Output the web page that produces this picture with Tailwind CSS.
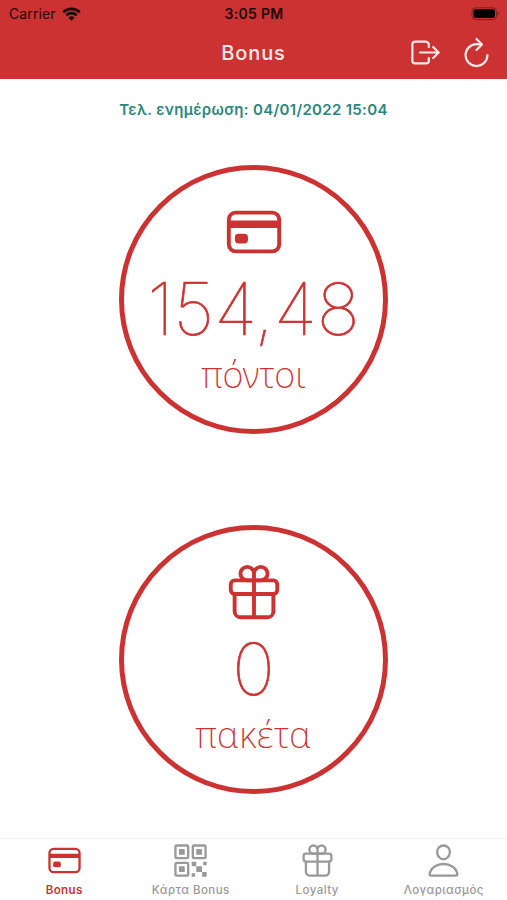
<!DOCTYPE html>
<html lang="el">
<head>
<meta charset="utf-8">
<title>Bonus</title>
<script src="https://cdn.jsdelivr.net/npm/@tailwindcss/browser@4"></script>
</head>
<body class="w-[507px] h-[900px] overflow-hidden bg-white font-['Inter','Noto_Sans',sans-serif]">
<svg class="hidden">
  <symbol id="card" viewBox="0 0 512 512"><g fill="none" stroke="currentColor" stroke-width="32" stroke-linejoin="round"><rect x="48" y="96" width="416" height="320" rx="56"/><path stroke-width="60" d="M48 192h416M128 300h48v20h-48z"/></g></symbol>
  <symbol id="gift" viewBox="0 0 512 512"><g fill="none" stroke="currentColor" stroke-width="32" stroke-linecap="round" stroke-linejoin="round"><path d="M256 104v56h56a56 56 0 1 0-56-56zM256 104v56h-56a56 56 0 1 1 56-56z"/><rect x="64" y="160" width="384" height="112" rx="32"/><path d="M416 272v144a48 48 0 0 1-48 48H144a48 48 0 0 1-48-48V272M256 160v304"/></g></symbol>
  <symbol id="qr" viewBox="0 0 512 512"><g fill="currentColor"><rect x="336" y="336" width="80" height="80" rx="8"/><rect x="272" y="272" width="64" height="64" rx="8"/><rect x="416" y="416" width="64" height="64" rx="8"/><rect x="432" y="272" width="48" height="48" rx="8"/><rect x="272" y="432" width="48" height="48" rx="8"/><rect x="336" y="96" width="80" height="80" rx="8"/><rect x="96" y="96" width="80" height="80" rx="8"/><rect x="96" y="336" width="80" height="80" rx="8"/></g><g fill="none" stroke="currentColor" stroke-width="32"><rect x="288" y="48" width="176" height="176" rx="16"/><rect x="48" y="48" width="176" height="176" rx="16"/><rect x="48" y="288" width="176" height="176" rx="16"/></g></symbol>
  <symbol id="person" viewBox="0 0 512 512"><g fill="none" stroke="currentColor" stroke-width="32" stroke-linecap="round" stroke-linejoin="round"><path d="M344 144c-3.920 52.870-44 96-88 96s-84.150-43.120-88-96c-4-55 35-96 88-96s92 42 88 96z"/><path d="M256 304c-87 0-175.300 48-191.640 138.600C62.390 453.520 68.570 464 80 464h352c11.440 0 17.620-10.480 15.650-21.400C431.300 352 343 304 256 304z"/></g></symbol>
</svg>
<div class="flex flex-col h-full">
  <header class="h-[79px] shrink-0 bg-[#cd3232]">
    <div class="grid grid-cols-3 items-center h-[27px] pl-[9px] pr-[7px] text-[14px] text-[#1c0808]">
      <div class="flex items-center gap-[6px]">
        <span class="tracking-[0.1px]">Carrier</span>
        <svg class="w-[19px] h-[14px]" viewBox="0 0 19 14" fill="none" stroke="currentColor" stroke-width="2.6"><path d="M1.300 5.200a11.800 11.800 0 0 1 16.400 0M4.300 8.200a7.500 7.500 0 0 1 10.400 0"/><path fill="currentColor" stroke="none" d="M9.500 13.800 6.400 10.700a4.500 4.500 0 0 1 6.200 0z"/></svg>
      </div>
      <span class="text-center font-semibold whitespace-nowrap tracking-[0.3px] pr-[1px]">3:05 PM</span>
      <svg class="justify-self-end w-[30px] h-[14px]" viewBox="0 0 30 14"><rect x="2" y="0.800" width="24.500" height="11.800" rx="3.500" fill="none" stroke="#7c1e1e" stroke-width="1"/><rect x="3.500" y="2.300" width="21.500" height="8.800" rx="2" fill="#000"/><path d="M28.200 5.200v3" stroke="#7c1e1e" stroke-width="1.200"/></svg>
    </div>
    <div class="grid grid-cols-[1fr_auto_1fr] items-center h-[51px] pr-[13px] pl-[13px] text-[#ffe9e9]">
      <span></span>
      <h1 class="text-[20px] font-medium tracking-[0.9px]">Bonus</h1>
      <div class="flex justify-end gap-[16.500px]">
        <svg class="size-[35px]" viewBox="0 0 512 512" fill="none" stroke="currentColor" stroke-width="32" stroke-linecap="round" stroke-linejoin="round"><path d="M304 336v40a40 40 0 0 1-40 40H104a40 40 0 0 1-40-40V136a40 40 0 0 1 40-40h152c22.090 0 48 17.910 48 40v40M368 336l80-80-80-80M176 256h256"/></svg>
        <svg class="size-[35px]" viewBox="0 0 512 512" fill="none" stroke="currentColor" stroke-width="32" stroke-linecap="round"><path d="M320 146s24.360-12-64-12a160 160 0 1 0 160 160"/><path stroke-linejoin="round" d="m256 58 80 80-80 80"/></svg>
      </div>
    </div>
  </header>
  <main class="flex-1 flex flex-col items-center text-[#cd3232]">
    <p class="mt-[18px] h-[24px] leading-[25px] text-[15px] font-semibold tracking-[0.32px] text-[#2b877d] whitespace-nowrap">Τελ. ενημέρωση: 04/01/2022 15:04</p>
    <section class="mt-[44px] size-[269px] shrink-0 rounded-full border-[5px] border-[#cd3232] flex flex-col items-center">
      <svg class="mt-[31px] size-[62px] shrink-0"><use href="#card"/></svg>
      <div class="mt-[9px] h-[72px] leading-[73px] text-[72px] font-thin [-webkit-text-stroke:0.7px_#cd3232] whitespace-nowrap">154,48</div>
      <div class="mt-[11px] h-[40px] leading-[40px] text-[36px] font-['Noto_Sans'] font-extralight tracking-[0.1px] whitespace-nowrap">πόντοι</div>
    </section>
    <section class="mt-[91px] size-[269px] shrink-0 rounded-full border-[5px] border-[#cd3232] flex flex-col items-center">
      <svg class="mt-[31px] size-[62px] shrink-0"><use href="#gift"/></svg>
      <div class="mt-[9px] h-[72px] leading-[73px] text-[72px] font-thin [-webkit-text-stroke:0.7px_#cd3232] whitespace-nowrap">0</div>
      <div class="mt-[11px] h-[40px] leading-[40px] text-[36px] font-['Noto_Sans'] font-extralight tracking-[0.5px] whitespace-nowrap">πακέτα</div>
    </section>
  </main>
  <nav class="h-[62px] shrink-0 border-t border-[#f0f0f0] grid grid-cols-4 pl-px text-[#999] text-[11.500px] font-medium tracking-[0.450px]">
    <a class="flex flex-col items-center pt-[3px] text-[#cd3232] font-semibold"><svg class="size-[37px]"><use href="#card"/></svg><span class="mt-[2px] leading-[18px]">Bonus</span></a>
    <a class="flex flex-col items-center pt-[3px]"><svg class="size-[37px]"><use href="#qr"/></svg><span class="mt-[2px] leading-[18px]">Κάρτα Bonus</span></a>
    <a class="flex flex-col items-center pt-[3px]"><svg class="size-[37px]"><use href="#gift"/></svg><span class="mt-[2px] leading-[18px]">Loyalty</span></a>
    <a class="flex flex-col items-center pt-[3px]"><svg class="size-[37px]"><use href="#person"/></svg><span class="mt-[2px] leading-[18px]">Λογαριασμός</span></a>
  </nav>
</div>
</body>
</html>
